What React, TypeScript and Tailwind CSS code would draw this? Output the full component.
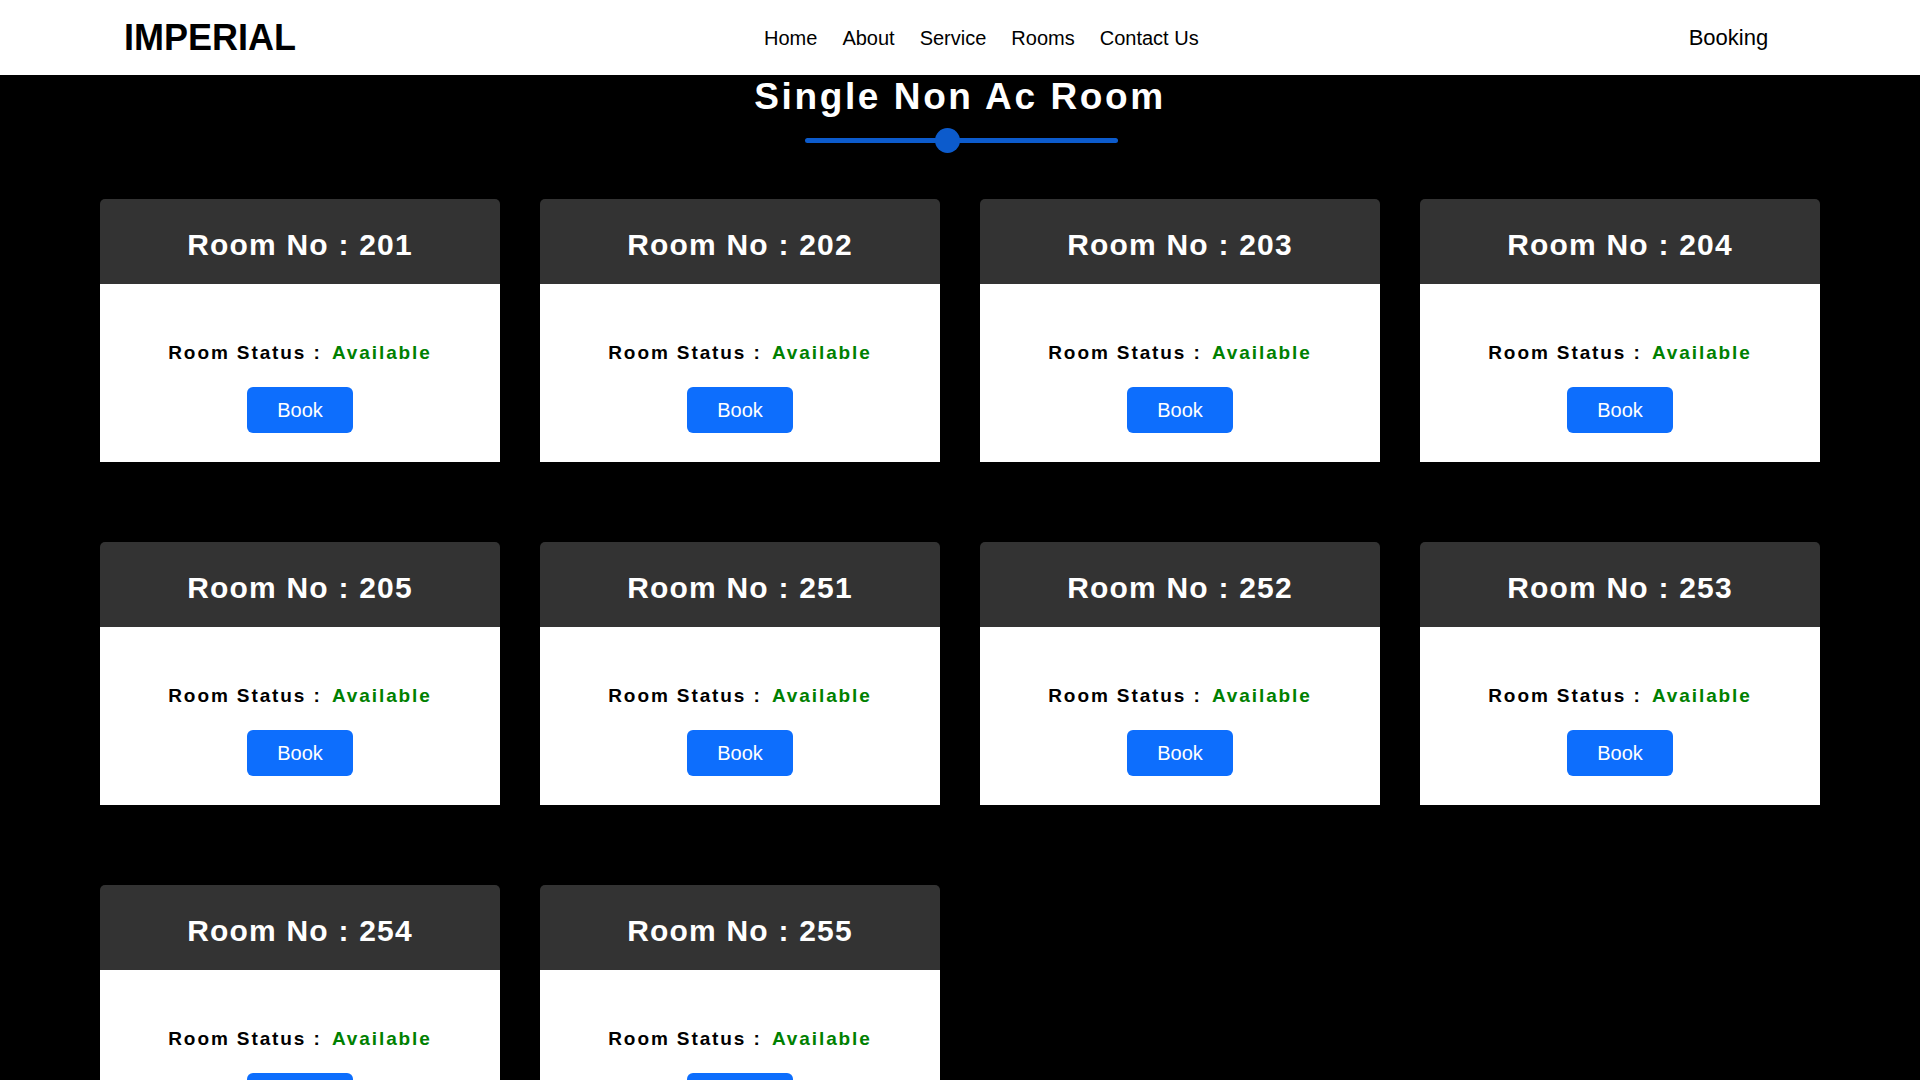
import React from "react";

const rooms = ["201", "202", "203", "204", "205", "251", "252", "253", "254", "255"];

const navLinks = ["Home", "About", "Service", "Rooms", "Contact Us"];

const RoomCard = ({ number }: { number: string }) => {
  return (
    <div className="w-[400px] flex flex-col">
      <div className="h-[85px] bg-[#333333] rounded-t-[5px] pt-[29px] text-center">
        <h3 className="text-white text-[30px] leading-[34px] font-bold tracking-[1.2px]">
          Room No : {number}
        </h3>
      </div>
      <div className="bg-white flex flex-col items-center pt-[58px] pb-[29px]">
        <p className="text-[19px] leading-[22px] font-bold tracking-[1.9px] text-black">
          Room Status : <span className="text-[#008000] ml-[3px]">Available</span>
        </p>
        <button className="mt-[23px] h-[46px] px-[30px] bg-[#0d6efd] text-white text-[20px] rounded-[6px]">
          Book
        </button>
      </div>
    </div>
  );
};

export default function App() {
  return (
    <div className="min-h-screen bg-black font-['Liberation_Sans',Arial,sans-serif]">
      <header className="h-[75px] bg-white flex items-center pl-[124px]">
        <a className="text-[36px] leading-none font-bold text-black">IMPERIAL</a>
        <nav className="ml-[468px] flex gap-[25px]">
          {navLinks.map((link) => (
            <a key={link} className="text-[20px] leading-none text-black">
              {link}
            </a>
          ))}
        </nav>
        <a className="ml-[490px] text-[22px] leading-none text-black">Booking</a>
      </header>

      <section className="flex flex-col items-center">
        <h2 className="text-white text-[37px] leading-[44px] font-bold tracking-[2.6px]">
          Single Non Ac Room
        </h2>
        <div className="relative mt-[9px] w-[313px] h-[25px] ml-[2px] flex items-center">
          <div className="w-full h-[5px] rounded-full bg-[#0c5bcc]" />
          <div className="absolute left-[130px] top-0 w-[25px] h-[25px] rounded-full bg-[#0c5bcc]" />
        </div>
      </section>

      <div className="grid grid-cols-4 gap-x-[40px] gap-y-[80px] px-[100px] mt-[46px] pb-[80px]">
        {rooms.map((room) => (
          <RoomCard key={room} number={room} />
        ))}
      </div>
    </div>
  );
}
